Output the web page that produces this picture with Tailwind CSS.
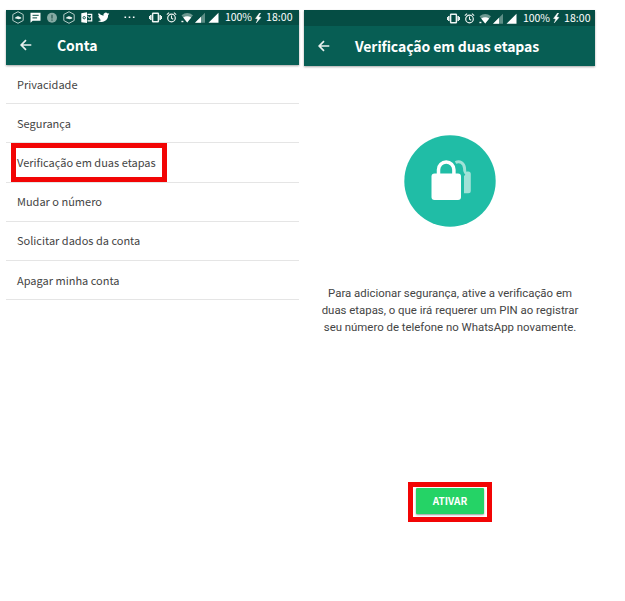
<!DOCTYPE html>
<html lang="pt-BR">
<head>
<meta charset="utf-8">
<title>Conta</title>
<script src="https://cdn.jsdelivr.net/npm/@tailwindcss/browser@4"></script>
</head>
<body class="bg-white w-[625px] h-[601px] overflow-hidden font-['Noto_Sans_CJK_SC','Noto_Sans',sans-serif] text-[#444]">
<svg class="hidden">
  <defs>
    <g id="phone-status" fill="none" stroke="#eef4f2">
      <rect x="3.6" y="2.2" width="5.8" height="8.6" rx=".6" stroke-width="1.5"/>
      <path d="M1.8 4v5M11.2 4v5" stroke-width="1.5"/><path d="M.5 5v3M12.5 5v3" stroke-width="1"/>
      <circle cx="22.5" cy="7" r="3.8" stroke-width="1.2"/><path d="M22.5 4.6v2.7l1.7 1M17.8 3.7l2.3-2M27.2 3.7l-2.3-2" stroke-width="1.1"/>
      <path d="M32.5 4.3Q38.2-.2 44 4.3L38.2 11.5Z" fill="#6d9991" stroke="none"/>
      <path d="M34.2 6.4Q38.2 4 42.2 6.4L38.2 11.5Z" fill="#fff" stroke="none"/>
      <path d="M32.4 10.5h2" stroke-width="1.4"/>
      <path d="M56 1.7v10H46Z" fill="#5d8e86" stroke="none"/><path d="M52 5.7v6h-6Z" fill="#fff" stroke="none"/>
      <path d="M69.5 1.7v10h-10Z" fill="#fff" stroke="none"/>
    </g>
    <path id="bolt" d="M4.5 0 .5 5.5l2.3.4L1.2 10 6 4.4l-2.4-.6L5.7 0Z" fill="#fff" stroke="#fff" stroke-width=".4"/>
    <path id="back" d="M11.3 6H1.4M6 1.2 1.2 6 6 10.8" fill="none" stroke="#e8f0ee" stroke-width="1.7"/>
    <g id="hex"><path d="M6 .7 11.2 3.5v6L6 12.3.8 9.5v-6Z" fill="none" stroke="#b5cdc8" stroke-width="1"/><path d="M2.8 7.3Q3 6.2 4.2 6 5 4.9 6.4 5.3L9.2 6.6v1L6.8 8.2Z" fill="#e8f1ee"/></g>
  </defs>
</svg>
<div class="flex pt-[10px] pl-[6px] gap-[5px]">
  <section class="w-[293px]">
    <header class="bg-[#075e54] h-[55px] shadow-[0_1px_2px_rgba(0,0,0,0.35)]">
      <div class="h-[15px] bg-[#054d44] flex items-center text-white text-[10.5px] leading-none">
        <svg class="w-[126px] h-[13px] ml-[6px] shrink-0" viewBox="0 0 126 13">
          <use href="#hex"/>
          <path d="M18.5 1.8h10v8h-7.8l-2.2 2Z" fill="#fff"/><path d="M20.5 4.3h6.2M20.5 6.9h4.6" stroke="#054d44" stroke-width="1"/>
          <circle cx="40" cy="6.7" r="5" fill="#84aaa3"/><path d="M40 3.7v3.7M40 8.4v1.4" stroke="#315f58" stroke-width="1.3"/>
          <use href="#hex" x="51"/>
          <path d="M69.3 2.2 75 1.3v10.8l-5.7-.9Z" fill="#fff"/><path d="M75.5 3.4h4.2v6.5h-4.2" fill="none" stroke="#fff" stroke-width="1.2"/><path d="m75.5 5.3 2 1.6 2-1.6" fill="none" stroke="#fff"/><circle cx="72.2" cy="6.7" r="1.2" fill="none" stroke="#054d44" stroke-width=".9"/>
          <g transform="translate(85.8 .6) scale(.48)"><path fill="#fff" d="M24 4.6a10 10 0 0 1-2.8.8 5 5 0 0 0 2.1-2.7 10 10 0 0 1-3.1 1.2 4.9 4.9 0 0 0-8.4 4.5A14 14 0 0 1 1.7 3.1a4.9 4.9 0 0 0 1.5 6.6 5 5 0 0 1-2.2-.6 4.9 4.9 0 0 0 3.9 4.9 5 5 0 0 1-2.2.1 4.9 4.9 0 0 0 4.6 3.4A10 10 0 0 1 0 19.5a14 14 0 0 0 21.5-12.4A10 10 0 0 0 24 4.6Z"/></g>
          <path d="M112.5 6.2h1.6M116.7 6.2h1.6M120.9 6.2h1.6" stroke="#fff" stroke-width="1.5"/>
        </svg>
        <svg class="w-[71px] h-[13px] ml-[11px] shrink-0" viewBox="0 0 71 13"><use href="#phone-status"/></svg>
        <span class="w-[30px] ml-[5px] tracking-[-0.1px]">100%</span>
        <svg class="w-[7px] h-[10px] shrink-0" viewBox="0 0 7 10"><use href="#bolt"/></svg>
        <span class="ml-[4px] tracking-[0.1px]">18:00</span>
      </div>
      <div class="h-[40px] flex items-center text-white">
        <svg class="w-[12px] h-[12px] ml-[14px]" viewBox="0 0 12 12"><use href="#back"/></svg>
        <h1 class="ml-[25px] text-[14px] leading-[20px] font-bold tracking-[-0.08px] whitespace-nowrap">Conta</h1>
      </div>
    </header>
    <ul class="text-[11px] leading-[18px] whitespace-nowrap">
      <li class="h-[39.2px] pl-[11px] pb-[1px] flex items-center border-b border-[#e5e5e5]">Privacidade</li>
      <li class="h-[39.2px] pl-[11px] pb-[1px] flex items-center border-b border-[#e5e5e5]">Segurança</li>
      <li class="relative h-[39.2px] pl-[11px] pb-[1px] flex items-center border-b border-[#e5e5e5]">Verificação em duas etapas
        <span class="absolute left-[5px] top-0 w-[156px] h-[39px] border-[5px] border-[#f20505]"></span>
      </li>
      <li class="h-[39.2px] pl-[11px] pb-[1px] flex items-center border-b border-[#e5e5e5]">Mudar o número</li>
      <li class="h-[39.2px] pl-[11px] pb-[1px] flex items-center border-b border-[#e5e5e5]">Solicitar dados da conta</li>
      <li class="h-[39.2px] pl-[11px] pb-[1px] flex items-center border-b border-[#e5e5e5]">Apagar minha conta</li>
    </ul>
  </section>
  <section class="w-[291px] flex flex-col">
    <header class="bg-[#075e54] h-[56px] shadow-[0_1px_2px_rgba(0,0,0,0.35)]">
      <div class="h-[16px] bg-[#054d44] flex items-center text-white text-[10.5px] leading-none">
        <svg class="w-[71px] h-[13px] ml-[143px] shrink-0" viewBox="0 0 71 13"><use href="#phone-status"/></svg>
        <span class="w-[30px] ml-[5px] tracking-[-0.1px]">100%</span>
        <svg class="w-[7px] h-[10px] shrink-0" viewBox="0 0 7 10"><use href="#bolt"/></svg>
        <span class="ml-[4px] tracking-[0.1px]">18:00</span>
      </div>
      <div class="h-[40px] flex items-center text-white">
        <svg class="w-[12px] h-[12px] ml-[14px]" viewBox="0 0 12 12"><use href="#back"/></svg>
        <h1 class="ml-[25px] text-[14px] leading-[20px] font-bold tracking-[-0.08px] whitespace-nowrap">Verificação em duas etapas</h1>
      </div>
    </header>
    <svg class="w-[92px] h-[92px] mt-[69px] ml-[100px]" viewBox="0 0 92 92">
      <circle cx="46" cy="46" r="45.7" fill="#20bda6"/>
      <path d="M51.5 27.5c4-2 8.5 0 9 5.5 0 4 .5 5 3 6.5" fill="none" stroke="#a0e2d7" stroke-width="3"/>
      <path d="M60 41q2.5-1.5 3-4.5h1.3q2.5 0 2.5 2.5v16.7q0 2.5-2.5 2.5H60Z" fill="#a0e2d7"/>
      <path d="M34.5 41v-6.2a7.7 7.7 0 0 1 15.4 0V41" fill="none" stroke="#fff" stroke-width="3.5"/>
      <rect x="27.5" y="38.5" width="29.5" height="26.5" rx="3" fill="#fff"/>
    </svg>
    <p class="mt-[58px] ml-[1px] text-center font-[Roboto,sans-serif] text-[11.4px] leading-[17px] whitespace-nowrap">Para adicionar segurança, ative a verificação em<br>duas etapas, o que irá requerer um PIN ao registrar<br>seu número de telefone no WhatsApp novamente.</p>
    <div class="mt-[146px] ml-[104px] w-[84px] h-[40px] border-[5px] border-[#f20505] p-[1px] pl-[3px]">
      <button class="block w-[68px] h-[26px] bg-[#25d366] rounded-[1px] shadow-[0_1px_2px_rgba(0,0,0,0.4)] text-white text-[10px] leading-[26px] font-bold font-['Noto_Sans_CJK_SC',sans-serif]">ATIVAR</button>
    </div>
  </section>
</div>
</body>
</html>
